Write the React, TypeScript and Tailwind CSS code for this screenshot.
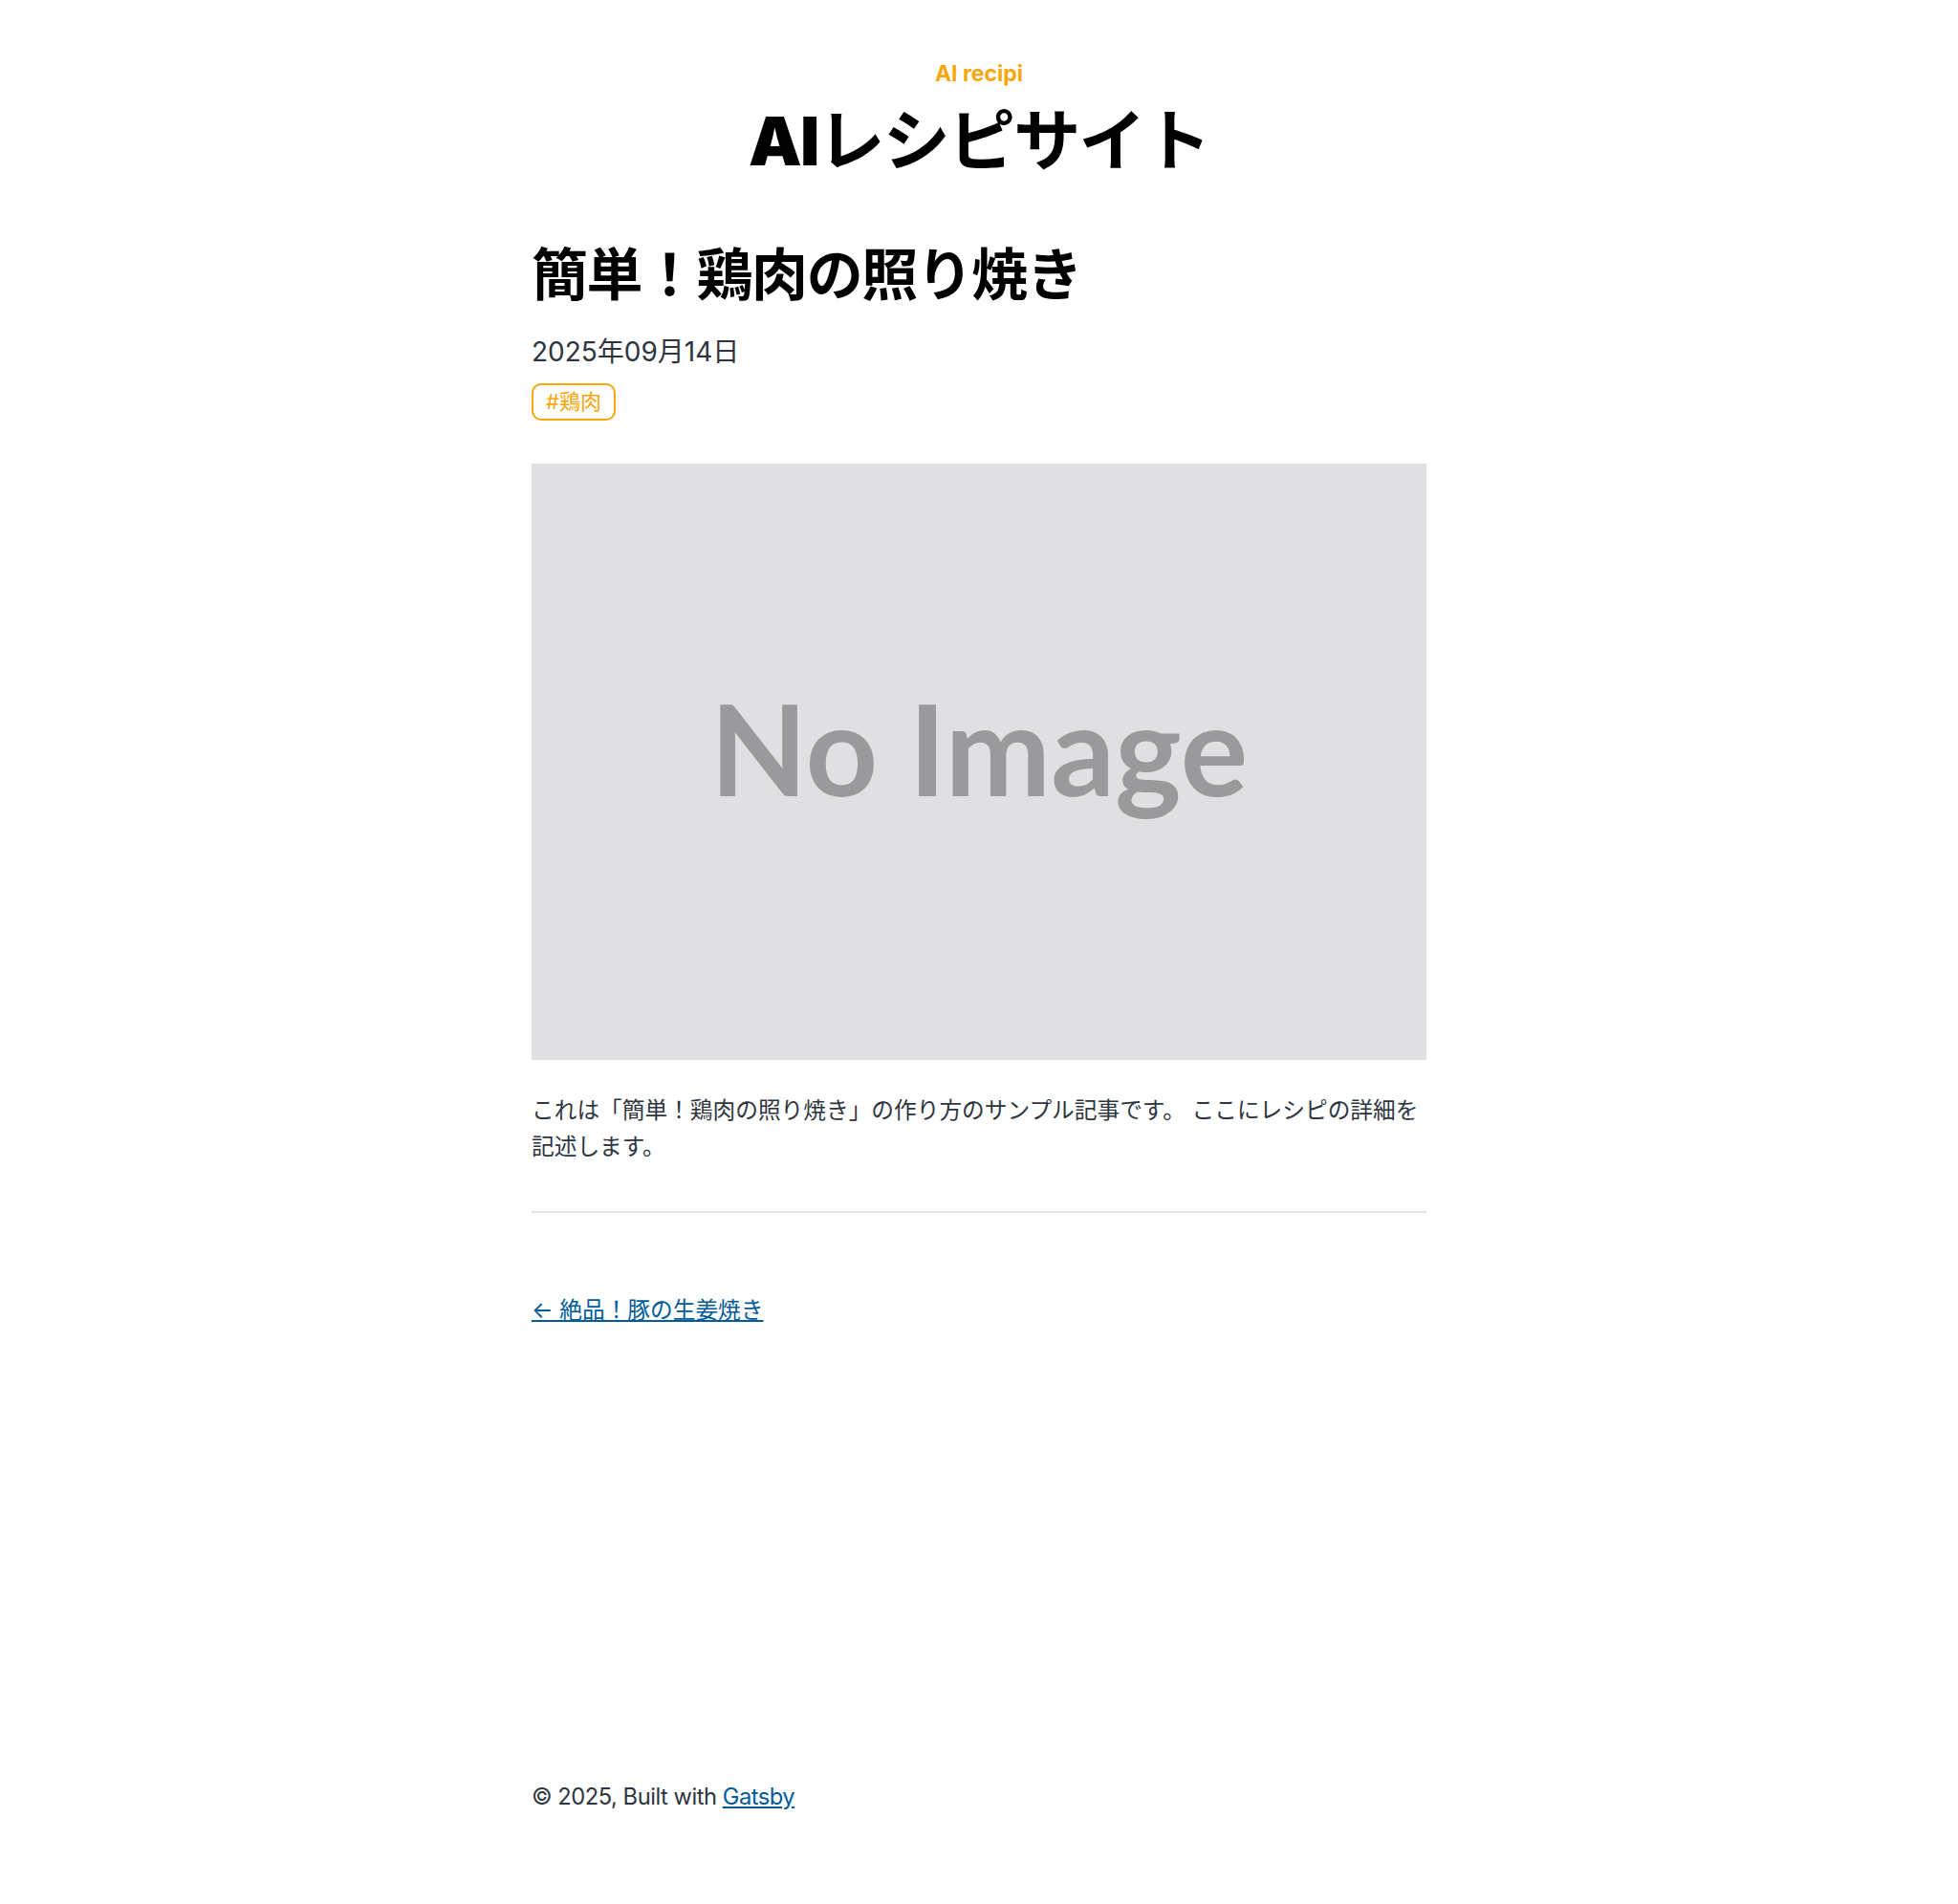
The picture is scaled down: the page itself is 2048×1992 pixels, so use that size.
export default function App() {
  return (
    <div className="bg-white font-['Inter','Noto_Sans_CJK_JP',sans-serif] text-[#2e353f]">
      <div className="mx-auto w-[936px] pt-[62px] pb-[60px]">
        <header className="text-center">
          <a
            href="#"
            className="block text-[23px] font-bold leading-[30px] text-[#f7a70a] no-underline"
          >
            AI recipi
          </a>
          <h1 className="mt-[16px] text-[70px] font-black leading-[80px] tracking-[-0.025em] text-black">
            AI<span className="font-bold">レシピサイト</span>
          </h1>
        </header>

        <article className="mt-[67px]">
          <h1 className="text-[59px] font-bold leading-[65px] tracking-[-0.025em] text-black">
            簡単！鶏肉の照り焼き
          </h1>
          <p className="mt-[25px] text-[28px] leading-[46px]">2025年09月14日</p>
          <div className="mt-[10px] flex">
            <span className="rounded-[10px] border-2 border-[#f7a70a] px-[13px] text-[22px] leading-[35px] text-[#f7a70a]">
              #鶏肉
            </span>
          </div>

          {/* placeholder image */}
          <div className="mt-[45px] flex h-[624px] items-center justify-center bg-[#e0e0e2] pb-[31px]">
            <span className="font-['Lato',sans-serif] text-[132px] font-bold leading-none text-[#9a9a9c]">
              No Image
            </span>
          </div>

          <p className="mt-[34px] text-[23.7px] leading-[38px]">
            これは「簡単！鶏肉の照り焼き」の作り方のサンプル記事です。 ここにレシピの詳細を記述します。
          </p>
        </article>

        <hr className="mt-[48px] h-[2px] border-0 bg-[#e2e4e8]" />

        <nav className="mt-[83px] text-[23.7px] leading-[38.5px]">
          <a href="#" className="text-[#005b99] underline">
            ← 絶品！豚の生姜焼き
          </a>
        </nav>

        <footer className="mt-[470px] text-[23.7px] leading-[38.5px] tracking-[-0.02em]">
          © 2025, Built with{" "}
          <a href="#" className="text-[#005b99] underline">
            Gatsby
          </a>
        </footer>
      </div>
    </div>
  );
}
